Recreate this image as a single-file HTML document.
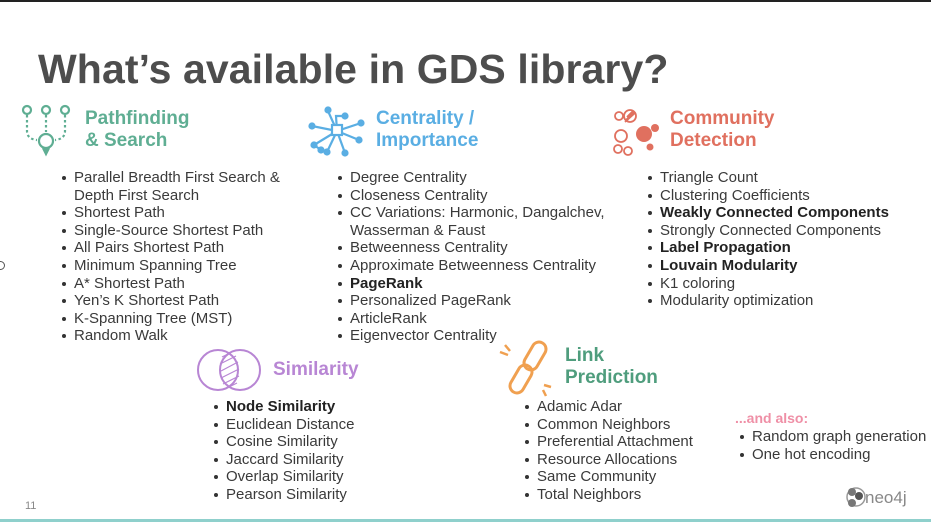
<!DOCTYPE html>
<html><head><meta charset="utf-8"><style>
*{margin:0;padding:0;box-sizing:border-box}
body{width:931px;height:522px;background:#fff;position:relative;overflow:hidden;font-family:"Liberation Sans",sans-serif;color:#3a3a3a}
.top{position:absolute;left:0;top:0;width:931px;height:2px;background:#222}
.bot{position:absolute;left:0;top:519px;width:931px;height:3px;background:#8fd0cc}
h1{position:absolute;left:38px;top:46px;font-size:41px;font-weight:bold;color:#4d4d4d;white-space:nowrap;letter-spacing:0.1px}
.hd{position:absolute;font-size:19px;font-weight:bold;line-height:22px}
ul{position:absolute;list-style:none;font-size:15px;line-height:17.6px;white-space:nowrap}
li{position:relative;padding-left:12px}
li:before{content:"";position:absolute;left:0;top:7px;width:4px;height:4px;border-radius:50%;background:#333}
b{font-weight:bold;color:#222}
.num{position:absolute;left:25px;top:500px;font-size:11px;color:#888}
</style></head><body>
<div class="top"></div>
<h1>What’s available in GDS library?</h1>

<svg style="position:absolute;left:15px;top:100px" width="70" height="60" viewBox="15 100 70 60" fill="none" stroke="#5fae93" stroke-width="2.2">
<circle cx="27" cy="110" r="4"/><circle cx="46" cy="110" r="4"/><circle cx="65" cy="110" r="4"/>
<path d="M27 115 V131 Q27 139 37 140" stroke-dasharray="2.5 2.5"/><path d="M65 115 V131 Q65 139 55 140" stroke-dasharray="2.5 2.5"/><path d="M46 115 V132" stroke-dasharray="2.5 2.5"/>
<circle cx="46" cy="141" r="7"/><path d="M43 148 L46 154 L49 148" fill="#5fae93"/>
</svg>
<div class="hd" style="left:85px;top:108px;color:#5fae93">Pathfinding<br>&amp; Search</div>

<svg style="position:absolute;left:308px;top:100px" width="60" height="60" viewBox="308 100 60 60" stroke="#5aaee3" stroke-width="2.2" fill="#5aaee3">
<path d="M337 131 L328 111 M337 131 L336 116 L345 116 M337 131 L361 123 M337 131 L312 126 M337 131 L314 145 L321 150 M337 131 L345 153 M337 131 L359 140 M337 131 L327 152" fill="none"/>
<rect x="332" y="125" width="10" height="10" fill="#fff"/>
<circle cx="328" cy="110" r="2.5"/><circle cx="345" cy="116" r="2.5"/><circle cx="361" cy="123" r="2.5"/><circle cx="312" cy="126" r="2.5"/><circle cx="314" cy="145" r="2.5"/><circle cx="321" cy="150" r="2.5"/><circle cx="345" cy="153" r="2.5"/><circle cx="359" cy="140" r="2.5"/><circle cx="327" cy="152" r="2.5"/>
</svg>
<div class="hd" style="left:376px;top:108px;color:#5aaee3">Centrality /<br>Importance</div>

<svg style="position:absolute;left:610px;top:103px" width="55" height="55" viewBox="610 103 55 55" stroke="#e0705f" stroke-width="1.8" fill="none">
<circle cx="619" cy="116" r="4"/><circle cx="630" cy="116" r="6"/><path d="M626 120 L634 112 M627 117 L633 111 M625 122 L635 113"/>
<circle cx="621" cy="136" r="6"/><circle cx="618" cy="149" r="4"/><circle cx="628" cy="151" r="4"/>
<circle cx="644" cy="134" r="8" fill="#e0705f" stroke="none"/><circle cx="655" cy="128" r="4" fill="#e0705f" stroke="none"/><circle cx="650" cy="147" r="3.5" fill="#e0705f" stroke="none"/>
</svg>
<div class="hd" style="left:670px;top:108px;color:#e0705f">Community<br>Detection</div>

<ul style="left:62px;top:169px">
<li>Parallel Breadth First Search &amp;<br>Depth First Search</li>
<li>Shortest Path</li><li>Single-Source Shortest Path</li><li>All Pairs Shortest Path</li><li>Minimum Spanning Tree</li><li>A* Shortest Path</li><li>Yen’s K Shortest Path</li><li>K-Spanning Tree (MST)</li><li>Random Walk</li>
</ul>
<ul style="left:338px;top:169px">
<li>Degree Centrality</li><li>Closeness Centrality</li><li>CC Variations: Harmonic, Dangalchev,<br>Wasserman &amp; Faust</li><li>Betweenness Centrality</li><li>Approximate Betweenness Centrality</li><li><b>PageRank</b></li><li>Personalized PageRank</li><li>ArticleRank</li><li>Eigenvector Centrality</li>
</ul>
<ul style="left:648px;top:169px">
<li>Triangle Count</li><li>Clustering Coefficients</li><li><b>Weakly Connected Components</b></li><li>Strongly Connected Components</li><li><b>Label Propagation</b></li><li><b>Louvain Modularity</b></li><li>K1 coloring</li><li>Modularity optimization</li>
</ul>

<svg style="position:absolute;left:196px;top:346px" width="70" height="48" viewBox="196 346 70 48" stroke="#b886d4" stroke-width="2" fill="none">
<circle cx="218" cy="370" r="20"/><circle cx="240" cy="370" r="20"/>
<path d="M222 357 L232 352 M220 364 L236 356 M221 371 L238 362 M221 378 L239 369 M223 384 L239 376 M227 388 L237 383" stroke-width="1.2"/>
</svg>
<div class="hd" style="left:273px;top:359px;color:#b886d4">Similarity</div>

<svg style="position:absolute;left:496px;top:338px" width="60" height="60" viewBox="496 338 60 60" stroke="#f0a050" stroke-width="3" fill="none">
<rect x="528" y="341" width="14" height="30" rx="7" transform="rotate(30 535 356)"/>
<rect x="514" y="364" width="14" height="30" rx="7" transform="rotate(30 521 379)"/>
<path d="M500 352 L508 355 M505 345 L510 351 M544 385 L551 387 M543 390 L546 396" stroke-width="2.5"/>
</svg>
<div class="hd" style="left:565px;top:345px;color:#4f9d7d">Link<br>Prediction</div>

<ul style="left:214px;top:398px">
<li><b>Node Similarity</b></li><li>Euclidean Distance</li><li>Cosine Similarity</li><li>Jaccard Similarity</li><li>Overlap Similarity</li><li>Pearson Similarity</li>
</ul>
<ul style="left:525px;top:398px">
<li>Adamic Adar</li><li>Common Neighbors</li><li>Preferential Attachment</li><li>Resource Allocations</li><li>Same Community</li><li>Total Neighbors</li>
</ul>
<div style="position:absolute;left:735px;top:410px;font-size:14px;font-weight:bold;color:#ef8fa6">...and also:</div>
<ul style="left:740px;top:428px">
<li>Random graph generation</li><li>One hot encoding</li>
</ul>

<svg style="position:absolute;left:843px;top:484px" width="80" height="26" viewBox="843 484 80 26">
<circle cx="856" cy="497" r="9" fill="none" stroke="#999" stroke-width="1.5"/><circle cx="852" cy="492" r="4" fill="#777"/><circle cx="859" cy="496" r="4" fill="#555"/><circle cx="852" cy="503" r="4" fill="#777"/>
<text x="865" y="503" font-family="Liberation Sans" font-size="17" fill="#888">neo4j</text>
</svg>
<div class="num">11</div>
<div style="position:absolute;left:-4px;top:261px;width:9px;height:9px;border:1.5px solid #555;border-radius:50%"></div>
<div class="bot"></div>
</body></html>
